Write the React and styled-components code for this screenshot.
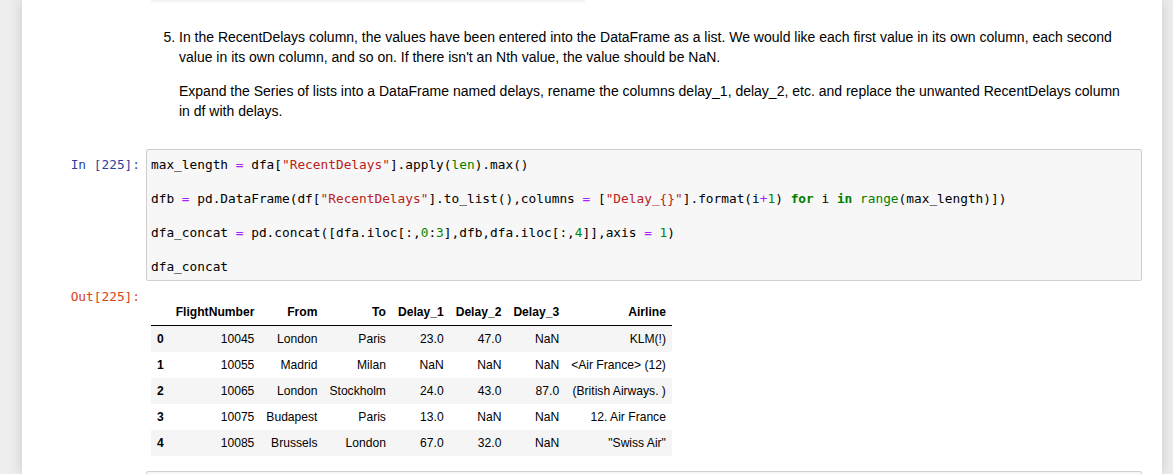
import React from 'react';
import styled, { createGlobalStyle } from 'styled-components';

const GlobalStyle = createGlobalStyle`
  html, body {
    margin: 0;
    padding: 0;
    background: #eeeeee;
    height: 474px;
    overflow: hidden;
  }
  * {
    box-sizing: border-box;
  }
`;

const rows = [
  ['0', '10045', 'London', 'Paris', '23.0', '47.0', 'NaN', 'KLM(!)'],
  ['1', '10055', 'Madrid', 'Milan', 'NaN', 'NaN', 'NaN', '<Air France> (12)'],
  ['2', '10065', 'London', 'Stockholm', '24.0', '43.0', '87.0', '(British Airways. )'],
  ['3', '10075', 'Budapest', 'Paris', '13.0', 'NaN', 'NaN', '12. Air France'],
  ['4', '10085', 'Brussels', 'London', '67.0', '32.0', 'NaN', '"Swiss Air"'],
];

const headers = ['', 'FlightNumber', 'From', 'To', 'Delay_1', 'Delay_2', 'Delay_3', 'Airline'];

const App = () => {
  return (
    <>
      <GlobalStyle />
      <Notebook>
        <Cell>
          <Prompt kind="empty" />
          <CellBody>
            <PrevTail />
          </CellBody>
        </Cell>

        <Cell>
          <Prompt kind="empty" />
          <Markdown>
            <List start={5}>
              <li>
                In the RecentDelays column, the values have been entered into the DataFrame as a
                list. We would like each first value in its own column, each second value in its own
                column, and so on. If there isn't an Nth value, the value should be NaN.
                <Para>
                  Expand the Series of lists into a DataFrame named delays, rename the columns
                  delay_1, delay_2, etc. and replace the unwanted RecentDelays column in df with
                  delays.
                </Para>
              </li>
            </List>
          </Markdown>
        </Cell>

        <Cell>
          <Prompt kind="in">In&nbsp;[225]:</Prompt>
          <CodeBox>
            <Line>
              max_length <Op>=</Op> dfa[<Str>"RecentDelays"</Str>].apply(<Builtin>len</Builtin>).max()
            </Line>
            <Line>&nbsp;</Line>
            <Line>
              dfb <Op>=</Op> pd.DataFrame(df[<Str>"RecentDelays"</Str>].to_list(),columns <Op>=</Op>{' '}
              [<Str>"Delay_{'{}'}"</Str>].format(i<Op>+</Op><Num>1</Num>) <Kw>for</Kw> i <Kw>in</Kw>{' '}
              <Builtin>range</Builtin>(max_length)])
            </Line>
            <Line>&nbsp;</Line>
            <Line>
              dfa_concat <Op>=</Op> pd.concat([dfa.iloc[:,<Num>0</Num>:<Num>3</Num>],dfb,dfa.iloc[:,
              <Num>4</Num>]],axis <Op>=</Op> <Num>1</Num>)
            </Line>
            <Line>&nbsp;</Line>
            <Line>dfa_concat</Line>
          </CodeBox>
        </Cell>

        <Cell>
          <Prompt kind="out">Out[225]:</Prompt>
          <Output>
            <Frame>
              <thead>
                <tr>
                  {headers.map((h, i) => (
                    <Th key={i}>{h}</Th>
                  ))}
                </tr>
              </thead>
              <tbody>
                {rows.map((r) => (
                  <Tr key={r[0]}>
                    <Th>{r[0]}</Th>
                    {r.slice(1).map((v, i) => (
                      <Td key={i}>{v}</Td>
                    ))}
                  </Tr>
                ))}
              </tbody>
            </Frame>
          </Output>
        </Cell>

        <Cell>
          <Prompt kind="empty" />
          <CodeBox>
            <Line>&nbsp;</Line>
          </CodeBox>
        </Cell>
      </Notebook>
    </>
  );
};

const Notebook = styled.div`
  margin-left: 22px;
  width: 1140px;
  height: 474px;
  padding: 0 20px;
  background: #fff;
  box-shadow: 0 0 12px 1px rgba(87, 87, 87, 0.2);
  overflow: hidden;
`;

const Cell = styled.div`
  display: flex;
  align-items: flex-start;
`;

const Prompt = styled.div`
  flex: 0 0 104px;
  padding: ${(p) => (p.kind === 'empty' ? '0' : '7px 6px 0 0')};
  text-align: right;
  font-family: 'DejaVu Sans Mono', monospace;
  font-size: 12.8px;
  line-height: 17px;
  color: ${(p) => (p.kind === 'out' ? '#D84315' : '#303F9F')};
`;

const CellBody = styled.div`
  flex: 1;
`;

const PrevTail = styled.div`
  margin-left: 5px;
  width: 434px;
  height: 2px;
  background: #f3f3f3;
`;

const Markdown = styled.div`
  flex: 1;
  padding: 25px 8px 28px 7px;
  font-family: 'Liberation Sans', Arial, sans-serif;
  font-size: 14px;
  line-height: 20px;
  color: #000;
`;

const List = styled.ol`
  margin: 0;
  padding-left: 26px;
`;

const Para = styled.p`
  margin: 14px 0 0;
`;

const CodeBox = styled.div`
  flex: 1;
  border: 1px solid #cfcfcf;
  border-radius: 2px;
  background: #f7f7f7;
  padding: 6px 4px 5px;
  font-family: 'DejaVu Sans Mono', monospace;
  font-size: 12.8px;
  line-height: 17px;
  color: #000;
`;

const Line = styled.div`
  white-space: pre;
`;

const Op = styled.span`
  color: #aa22ff;
`;

const Str = styled.span`
  color: #ba2121;
`;

const Num = styled.span`
  color: #008800;
`;

const Builtin = styled.span`
  color: #008000;
`;

const Kw = styled.span`
  color: #008000;
  font-weight: bold;
`;

const Output = styled.div`
  flex: 1;
  padding: 18px 5px 15px;
`;

const Frame = styled.table`
  border-collapse: collapse;
  border-spacing: 0;
  font-family: 'Liberation Sans', Arial, sans-serif;
  font-size: 12.1px;
  color: #000;

  thead th {
    border-bottom: 1px solid #000;
    vertical-align: bottom;
  }
`;

const Tr = styled.tr`
  &:nth-child(odd) {
    background: #f5f5f5;
  }
`;

const Th = styled.th`
  padding: 6px;
  line-height: 14px;
  text-align: right;
  font-weight: bold;
  white-space: nowrap;
`;

const Td = styled.td`
  padding: 6px;
  line-height: 14px;
  text-align: right;
  white-space: nowrap;
`;

export default App;
